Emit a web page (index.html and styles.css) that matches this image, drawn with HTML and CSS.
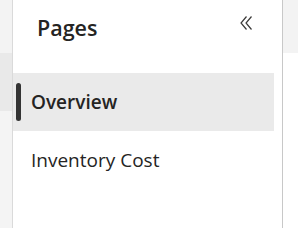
FILE: index.html
```html
<!DOCTYPE html>
<html>
<head>
<meta charset="utf-8">
<link rel="stylesheet" href="styles.css">
</head>
<body>
<div class="app">
  <div class="left-strip">
    <div class="ls-top"></div>
    <div class="ls-band"></div>
    <div class="ls-rest"></div>
  </div>
  <div class="panel">
    <div class="panel-head">
      <h1 class="title">Pages</h1>
      <button class="collapse" aria-label="Collapse">
        <svg width="14" height="16" viewBox="0 0 14 16">
          <path d="M6.5 1.5 L1 8 L6.5 14.5" fill="none" stroke="#3b3a39" stroke-width="1.2"/>
          <path d="M11.5 1.5 L6 8 L11.5 14.5" fill="none" stroke="#3b3a39" stroke-width="1.2"/>
        </svg>
      </button>
    </div>
    <ul class="pages">
      <li class="page active"><span class="indicator"></span><span class="label">Overview</span></li>
      <li class="page"><span class="label">Inventory Cost</span></li>
    </ul>
  </div>
  <div class="right-strip">
    <div class="rs-top"></div>
  </div>
</div>
</body>
</html>
```

FILE: styles.css
```css
html, body {
  margin: 0;
  padding: 0;
  background: #ffffff;
}
body {
  font-family: "Open Sans", "Noto Sans", sans-serif;
  color: #252423;
}
.app {
  display: flex;
  width: 298px;
  height: 228px;
  overflow: hidden;
}
.left-strip {
  width: 12px;
  display: flex;
  flex-direction: column;
  border-right: 1px solid #dadada;
  flex: none;
}
.ls-top { height: 53px; background: #f3f3f3; }
.ls-band { height: 58px; background: #e9e9e9; }
.ls-rest { flex: 1; background: #f4f4f4; }
.panel {
  width: 269px;
  flex: none;
  border-right: 1px solid #c8c8c8;
  display: flex;
  flex-direction: column;
  background: #fff;
}
.panel-head {
  height: 73px;
  display: flex;
  align-items: flex-start;
  justify-content: space-between;
  padding: 0 28px 0 24px;
  box-sizing: border-box;
}
.title {
  margin: 13px 0 0 0;
  font-size: 21.5px;
  font-weight: 600;
  line-height: 30px;
  color: #252423;
}
.collapse {
  margin-top: 15px;
  padding: 0;
  border: 0;
  background: none;
  width: 14px;
  height: 16px;
  display: flex;
}
.pages {
  list-style: none;
  margin: 0;
  padding: 0 8px 0 0;
}
.page {
  height: 58px;
  display: flex;
  align-items: center;
  padding-left: 18px;
  font-size: 19px;
  color: #252423;
  position: relative;
}
.page.active {
  background: #eaeaea;
  font-weight: 600;
}
.indicator {
  position: absolute;
  left: 3px;
  top: 10px;
  width: 5px;
  height: 38px;
  border-radius: 3px;
  background: #333333;
}
.right-strip {
  flex: 1;
  display: flex;
  flex-direction: column;
}
.rs-top { height: 53px; background: #f3f3f3; }
```
